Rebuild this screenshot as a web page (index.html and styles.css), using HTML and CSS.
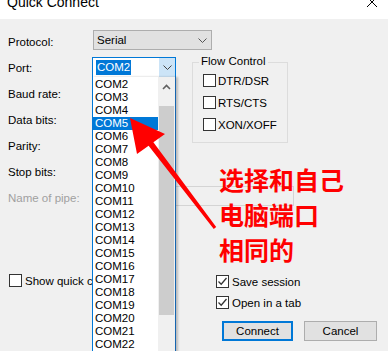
FILE: index.html
```html
<!DOCTYPE html>
<html lang="en">
<head>
    <meta charset="UTF-8">
    <meta name="viewport" content="width=device-width, initial-scale=1.0">
    <title>Quick Connect</title>
    <link rel="stylesheet" href="styles.css">
</head>
<body>

    <!-- Window title bar (scrolled so its top is cut off) -->
    <div class="titlebar">
        <span class="title">Quick Connect</span>
        <svg class="close" width="12" height="10" viewBox="0 0 12 10">
            <path d="M1 -3 L11 7 M11 -3 L1 7" stroke="#000" stroke-width="1" fill="none"/>
        </svg>
    </div>

    <div class="dialog">
        <div class="form">
            <span class="lbl">Protocol:</span>
            <div class="select protocol">
                <span>Serial</span>
                <svg class="chev" width="9" height="5" viewBox="0 0 9 5"><path d="M0.5 0.5 L4.5 4.5 L8.5 0.5" stroke="#555" fill="none"/></svg>
            </div>

            <span class="lbl">Port:</span>
            <div class="combo">
                <span class="combo-text">COM2</span>
                <span class="combo-btn">
                    <svg width="9" height="5" viewBox="0 0 9 5"><path d="M0.5 0.5 L4.5 4.5 L8.5 0.5" stroke="#444" fill="none"/></svg>
                </span>
            </div>

            <div class="group">
                <div class="group-title">Flow Control</div>
                <div class="check"><span class="box"></span>DTR/DSR</div>
                <div class="check"><span class="box"></span>RTS/CTS</div>
                <div class="check"><span class="box"></span>XON/XOFF</div>
            </div>

            <span class="lbl">Baud rate:</span>
            <div class="select small"></div>
            <span class="lbl">Data bits:</span>
            <div class="select small"></div>
            <span class="lbl">Parity:</span>
            <div class="select small"></div>
            <span class="lbl">Stop bits:</span>
            <div class="select small"></div>

            <span class="lbl disabled">Name of pipe:</span>
            <div class="edit"></div>
        </div>

        <div class="bottom">
            <div class="bottom-left">
                <div class="check wide"><span class="box"></span>Show quick connect on startup</div>
            </div>
            <div class="bottom-right">
                <div class="check wide"><span class="box checked">
                    <svg width="11" height="11" viewBox="0 0 11 11"><path d="M1.5 5.5 L4.2 8.2 L9.5 2" stroke="#333" stroke-width="1.3" fill="none"/></svg>
                </span>Save session</div>
                <div class="check wide"><span class="box checked">
                    <svg width="11" height="11" viewBox="0 0 11 11"><path d="M1.5 5.5 L4.2 8.2 L9.5 2" stroke="#333" stroke-width="1.3" fill="none"/></svg>
                </span>Open in a tab</div>
                <div class="buttons">
                    <button class="btn default">Connect</button>
                    <button class="btn">Cancel</button>
                </div>
            </div>
        </div>
    </div>

    <!-- Open port dropdown list, drawn over the form -->
    <div class="dropdown">
        <div class="items">
            <div class="item">COM2</div>
            <div class="item">COM3</div>
            <div class="item">COM4</div>
            <div class="item selected">COM5</div>
            <div class="item">COM6</div>
            <div class="item">COM7</div>
            <div class="item">COM8</div>
            <div class="item">COM9</div>
            <div class="item">COM10</div>
            <div class="item">COM11</div>
            <div class="item">COM12</div>
            <div class="item">COM13</div>
            <div class="item">COM14</div>
            <div class="item">COM15</div>
            <div class="item">COM16</div>
            <div class="item">COM17</div>
            <div class="item">COM18</div>
            <div class="item">COM19</div>
            <div class="item">COM20</div>
            <div class="item">COM21</div>
            <div class="item">COM22</div>
        </div>
        <div class="scrollbar">
            <svg class="up" width="9" height="6" viewBox="0 0 9 6"><path d="M1 5 L4.5 1.5 L8 5" stroke="#606060" stroke-width="1.6" fill="none"/></svg>
            <div class="thumb"></div>
        </div>
    </div>

    <!-- Red annotation -->
    <svg class="arrow" width="388" height="351" viewBox="0 0 388 351">
        <polygon points="130,118 165,134 153.4,142.2 216.2,227.1 213.8,228.9 148.6,145.8 137,154" fill="#ff0000"/>
    </svg>
    <div class="note">选择和自己<br>电脑端口<br>相同的</div>

</body>
</html>
```

FILE: styles.css
```css
/* Basic dialog styling */
html, body {
    margin: 0;
    height: 351px;
    overflow: hidden;
}
body {
    font-family: "Liberation Sans", Arial, sans-serif;
    font-size: 11.5px;
    color: #000;
    background-color: #f0f0f0;
    position: relative;
}
.titlebar {
    height: 19px;
    background-color: #fff;
    display: flex;
    justify-content: space-between;
    overflow: hidden;
}
.title {
    font-size: 14px;
    line-height: 14px;
    margin: -5px 0 0 7px;
}
.close {
    margin: 0 10px 0 0;
}
.form {
    display: grid;
    grid-template-columns: 85px 83px 16px 96px;
    grid-auto-rows: 26px;
    padding: 9px 0 0 8px;
}
.lbl {
    grid-column: 1;
    align-self: center;
    margin-top: 1px;
}
.lbl.disabled {
    color: #a0a0a0;
}
.select {
    height: 20px;
    box-sizing: border-box;
    border: 1px solid #adadad;
    background-color: #e1e1e1;
    align-self: center;
    display: flex;
    align-items: center;
    justify-content: space-between;
    padding: 0 4px 0 3px;
}
.protocol {
    grid-column: 2 / 5;
    width: 119px;
    margin-top: -2px;
}
.small {
    grid-column: 2;
}
.chev {
    margin-top: 1px;
}
.combo {
    grid-column: 2;
    grid-row: 2;
    align-self: center;
    margin-left: -1px;
    width: 84px;
    height: 21px;
    box-sizing: border-box;
    border: 1px solid #0078d7;
    background-color: #fff;
    display: flex;
    align-items: center;
    justify-content: space-between;
    padding-left: 3px;
}
.combo-text {
    background-color: #0078d7;
    color: #fff;
    line-height: 15px;
    padding: 0 1px;
}
.combo-btn {
    width: 16px;
    height: 19px;
    background-color: #cce4f7;
    display: flex;
    align-items: center;
    justify-content: center;
}
.group {
    grid-column: 4;
    grid-row: 2 / 6;
    align-self: start;
    margin-top: 8px;
    height: 81px;
    box-sizing: border-box;
    border: 1px solid #dcdcdc;
    padding-left: 10px;
    display: flex;
    flex-direction: column;
    gap: 9px;
}
.group-title {
    margin: -8px 0 -3px -4px;
    width: fit-content;
    padding: 0 2px;
    background-color: #f0f0f0;
    line-height: 13px;
}
.check {
    display: flex;
    align-items: center;
    height: 13px;
    gap: 2px;
    white-space: nowrap;
}
.check.wide {
    gap: 3px;
}
.box {
    width: 13px;
    height: 13px;
    box-sizing: border-box;
    border: 1px solid #333;
    background-color: #fff;
    flex: none;
    display: flex;
    align-items: center;
    justify-content: center;
}
.edit {
    grid-column: 2 / 5;
    width: 201px;
    height: 20px;
    box-sizing: border-box;
    border: 1px solid #d4d4d4;
    align-self: center;
    margin-top: -3px;
}
.bottom {
    display: grid;
    grid-template-columns: 216px 1fr;
    margin-top: 64px;
}
/* the dropdown hides the rest of this label */
.bottom-left {
    padding-left: 9px;
    width: 83px;
    overflow: hidden;
}
.bottom-right {
    display: flex;
    flex-direction: column;
    gap: 8px;
    padding-top: 1px;
}
.buttons {
    display: flex;
    gap: 11px;
    margin: 4px 0 0 6px;
}
.btn {
    font-family: inherit;
    font-size: 11.5px;
    width: 73px;
    height: 20px;
    background-color: #e1e1e1;
    border: 1px solid #adadad;
    padding: 0;
}
.btn.default {
    width: 71px;
    border: 2px solid #0078d7;
}
.dropdown {
    position: absolute;
    left: 92px;
    top: 77px;
    width: 84px;
    height: 280px;
    box-sizing: border-box;
    border-left: 1px solid #0078d7;
    border-right: 1px solid #1565b0;
    background-color: #fff;
    display: flex;
    box-shadow: 2px 0 2px rgba(0, 0, 0, 0.22);
}
.items {
    flex: 1;
    padding-top: 1px;
}
.item {
    height: 13px;
    line-height: 13px;
    padding-left: 2px;
}
.item.selected {
    background-color: #0078d7;
    color: #fff;
}
.scrollbar {
    width: 17px;
    background-color: #f0f0f0;
    display: flex;
    flex-direction: column;
    align-items: center;
}
.up {
    margin-top: 7px;
}
.thumb {
    margin-top: 16px;
    width: 15px;
    height: 209px;
    background-color: #cdcdcd;
}
.arrow {
    position: absolute;
    left: 0;
    top: 0;
}
.note {
    position: absolute;
    left: 219px;
    top: 162px;
    font-family: "Noto Sans CJK SC", sans-serif;
    font-weight: 700;
    font-size: 25px;
    line-height: 35px;
    color: #ff0000;
}
```
